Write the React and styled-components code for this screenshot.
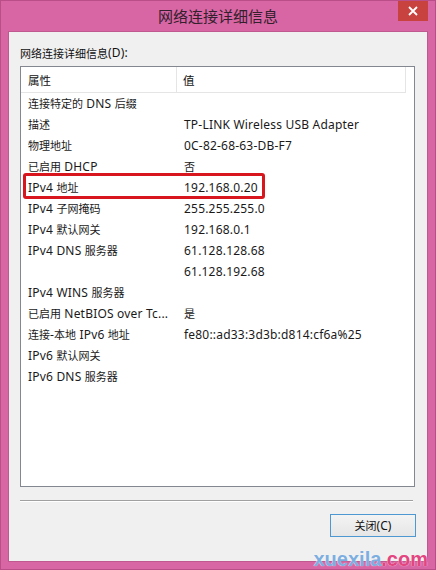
import React from "react";
import styled, { createGlobalStyle } from "styled-components";

const rows = [
  ["连接特定的 DNS 后缀", ""],
  ["描述", "TP-LINK Wireless USB Adapter"],
  ["物理地址", "0C-82-68-63-DB-F7"],
  ["已启用 DHCP", "否"],
  ["IPv4 地址", "192.168.0.20"],
  ["IPv4 子网掩码", "255.255.255.0"],
  ["IPv4 默认网关", "192.168.0.1"],
  ["IPv4 DNS 服务器", "61.128.128.68"],
  ["", "61.128.192.68"],
  ["IPv4 WINS 服务器", ""],
  ["已启用 NetBIOS over Tc...", "是"],
  ["连接-本地 IPv6 地址", "fe80::ad33:3d3b:d814:cf6a%25"],
  ["IPv6 默认网关", ""],
  ["IPv6 DNS 服务器", ""],
];

const uiFont = `"Noto Sans", "Noto Sans CJK SC", sans-serif`;

// latin glyphs run a bit larger than the han ones in the dialog font
function Mixed({ text }) {
  return text
    .split(/([\u4e00-\u9fff]+)/)
    .map((part, i) =>
      /[\u4e00-\u9fff]/.test(part) ? <Han key={i}>{part}</Han> : part
    );
}

function App() {
  return (
    <>
      <GlobalStyle />
      <Window>
        <TitleBar>
          <Title>网络连接详细信息</Title>
          <CloseButton>
            <svg width="10" height="10" viewBox="0 0 10 10">
              <path d="M1 1 L9 9 M9 1 L1 9" stroke="#fff" strokeWidth="1.8" />
            </svg>
          </CloseButton>
        </TitleBar>
        <Client>
          <Label>
            <Mixed text="网络连接详细信息(D):" />
          </Label>
          <ListBox>
            <HeaderRow>
              <HeaderCell>属性</HeaderCell>
              <HeaderCell $last>值</HeaderCell>
            </HeaderRow>
            {rows.map(([k, v], i) => (
              <Row key={i}>
                <Cell>
                  <Mixed text={k} />
                </Cell>
                <Cell $value>
                  <Mixed text={v} />
                </Cell>
              </Row>
            ))}
            <Highlight />
          </ListBox>
          <Separator />
          <ButtonRow>
            <Button>
              <Mixed text="关闭(C)" />
            </Button>
          </ButtonRow>
        </Client>
        <Watermark>
          <span>xuexila</span>
          <Dot>.com</Dot>
        </Watermark>
      </Window>
    </>
  );
}

const GlobalStyle = createGlobalStyle`
  html, body {
    margin: 0;
    padding: 0;
    background: #d866a4;
  }
  body {
    font-family: ${uiFont};
  }
`;

const Han = styled.span`
  font-family: "Noto Sans CJK SC", sans-serif;
  font-size: 11px;
  letter-spacing: 0;
`;

const Window = styled.div`
  position: relative;
  width: 436px;
  height: 570px;
  box-sizing: border-box;
  background: #d866a4;
  border: 1px solid #b94e88;
  display: flex;
  flex-direction: column;
  overflow: hidden;
`;

const TitleBar = styled.div`
  position: relative;
  height: 30px;
  display: flex;
  align-items: center;
  justify-content: center;
  flex-shrink: 0;
`;

const Title = styled.div`
  font-family: "Noto Sans CJK SC", sans-serif;
  font-size: 15px;
  color: #32202c;
  margin-top: -1px;
`;

const CloseButton = styled.div`
  position: absolute;
  right: 7px;
  top: -1px;
  width: 30px;
  height: 21px;
  background: #c8433f;
  display: flex;
  align-items: center;
  justify-content: center;
`;

const Client = styled.div`
  margin: 0 7px 7px;
  flex: 1;
  background: #f0f0f0;
  border: 1px solid #c05990;
  display: flex;
  flex-direction: column;
  padding: 0 12px 0 11px;
`;

const Label = styled.div`
  font-size: 12px;
  letter-spacing: 0.2px;
  color: #111;
  height: 34px;
  display: flex;
  align-items: center;
  padding-top: 7px;
  box-sizing: border-box;
  white-space: pre;
`;

const ListBox = styled.div`
  position: relative;
  height: 421px;
  box-sizing: border-box;
  background: #fff;
  border: 1px solid #828790;
  display: flex;
  flex-direction: column;
`;

const HeaderRow = styled.div`
  display: grid;
  grid-template-columns: 156px 1fr;
  height: 25px;
  border-bottom: 1px solid #e5e5e5;
  margin-right: 8px;
`;

const HeaderCell = styled.div`
  font-size: 11.5px;
  color: #111;
  display: flex;
  align-items: center;
  padding-left: ${(p) => (p.$last ? "6px" : "7px")};
  border-right: 1px solid #e5e5e5;
  font-family: "Noto Sans CJK SC", sans-serif;
`;

const Row = styled.div`
  display: grid;
  grid-template-columns: 157px 1fr;
  height: 21px;
  align-items: center;
`;

const Cell = styled.div`
  font-size: 12px;
  letter-spacing: 0.2px;
  line-height: 16px;
  color: #1a1a1a;
  white-space: pre;
  padding-left: ${(p) => (p.$value ? "6px" : "7px")};
`;

const Highlight = styled.div`
  position: absolute;
  left: 2px;
  top: 106px;
  width: 242px;
  height: 26px;
  box-sizing: border-box;
  border: 3px solid #d8161e;
  border-radius: 3px;
`;

const Separator = styled.div`
  margin: 13px 2px 0 0;
  height: 1px;
  background: #a0a0a0;
  border-bottom: 1px solid #fff;
`;

const ButtonRow = styled.div`
  display: flex;
  justify-content: flex-end;
  padding-top: 12px;
`;

const Button = styled.button`
  width: 86px;
  height: 23px;
  box-sizing: border-box;
  border: 1px solid #4d98d2;
  background: linear-gradient(#f3f3f3, #e6e6e6);
  font-family: ${uiFont};
  font-size: 12px;
  color: #111;
  padding: 0;
  margin-right: -1px;
`;

const Watermark = styled.div`
  position: absolute;
  right: 7px;
  bottom: -2px;
  font-family: "Liberation Sans", Arial, sans-serif;
  font-weight: bold;
  font-size: 20px;
  color: #7daee0;
  text-shadow: 0 0 1px #fff;
`;

const Dot = styled.span`
  color: #e2457f;
`;

export default App;
